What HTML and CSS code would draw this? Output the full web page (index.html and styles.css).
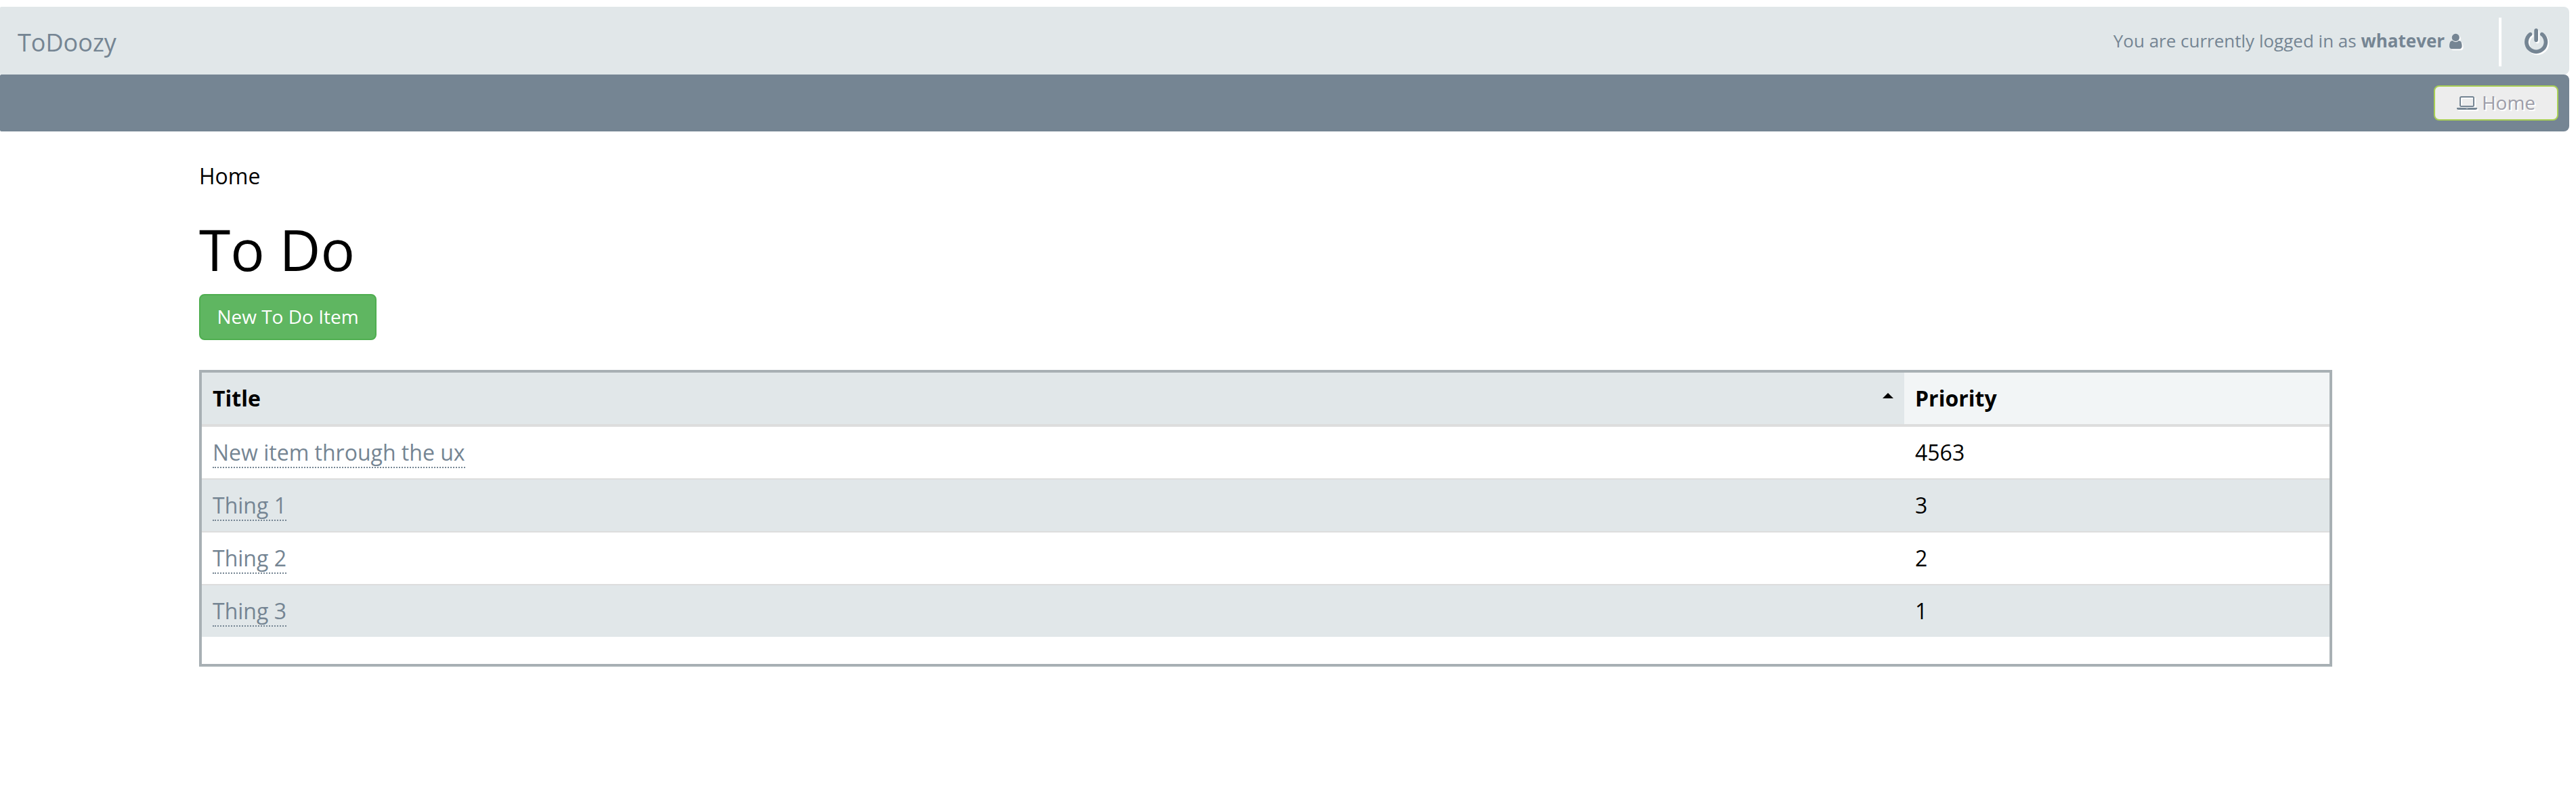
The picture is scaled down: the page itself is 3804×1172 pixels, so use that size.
FILE: index.html
```html
<!DOCTYPE html>
<html lang="en">
<head>
<meta charset="utf-8">
<title>ToDoozy</title>
<link rel="stylesheet" href="styles.css">
</head>
<body>
<header class="topbar">
  <a class="brand">ToDoozy</a>
  <div class="session">
    <span class="login">You are currently logged in as <strong>whatever</strong></span>
    <svg class="icon icon-user" viewBox="0 0 1280 1792"><path d="M1280 1399q0 109-62.5 187t-150.5 78h-854q-88 0-150.5-78t-62.5-187q0-85 8.5-160.5t31.5-152 58.5-131 94-89 134.5-34.5q131 128 313 128t313-128q76 0 134.5 34.5t94 89 58.5 131 31.5 152 8.5 160.5zm-256-887q0 159-112.5 271.5t-271.5 112.5-271.5-112.5-112.5-271.5 112.5-271.5 271.5-112.5 271.5 112.5 112.5 271.5z"/></svg>
  </div>
  <a class="logout">
    <svg class="icon icon-power" viewBox="0 0 1536 1792"><path d="M1536 896q0 156-61 298t-164 245-245 164-298 61-298-61-245-164-164-245-61-298q0-182 80.5-343t226.5-270q43-32 95.5-25t83.5 50q32 42 24.5 94.5t-49.5 84.5q-98 74-151.5 181t-53.5 228q0 104 40.5 198.5t109.5 163.5 163.5 109.5 198.5 40.5 198.5-40.5 163.5-109.5 109.5-163.5 40.5-198.5q0-121-53.5-228t-151.5-181q-42-32-49.5-84.5t24.5-94.5q31-43 84-50t95 25q146 109 226.5 270t80.5 343zm-640-768v640q0 52-38 90t-90 38-90-38-38-90v-640q0-52 38-90t90-38 90 38 38 90z"/></svg>
  </a>
</header>
<nav class="menubar">
  <a class="menu-item">
    <svg class="icon icon-laptop" viewBox="0 0 1920 1792"><path d="M416 1280q-66 0-113-47t-47-113v-704q0-66 47-113t113-47h1088q66 0 113 47t47 113v704q0 66-47 113t-113 47h-1088zm-32-864v704q0 13 9.5 22.5t22.5 9.5h1088q13 0 22.5-9.5t9.5-22.5v-704q0-13-9.5-22.5t-22.5-9.5h-1088q-13 0-22.5 9.5t-9.5 22.5zm1376 928h160v96q0 40-47 68t-113 28h-1600q-66 0-113-28t-47-68v-96h1760zm-720 96q16 0 16-16t-16-16h-160q-16 0-16 16t16 16h160z"/></svg>
    <span class="menu-label">Home</span>
  </a>
</nav>
<main class="page">
  <div class="breadcrumb">Home</div>
  <h1 class="title">To Do</h1>
  <a class="btn-new">New To Do Item</a>
  <div class="grid">
    <table class="items">
      <thead>
        <tr>
          <th class="col-title sorted"><div class="head">Title<span class="caret"></span></div></th>
          <th class="col-priority">Priority</th>
        </tr>
      </thead>
      <tbody>
        <tr><td><a class="link">New item through the ux</a></td><td>4563</td></tr>
        <tr><td><a class="link">Thing 1</a></td><td>3</td></tr>
        <tr><td><a class="link">Thing 2</a></td><td>2</td></tr>
        <tr><td><a class="link">Thing 3</a></td><td>1</td></tr>
      </tbody>
    </table>
  </div>
</main>
</body>
</html>
```
FILE: styles.css
```css
* { box-sizing: border-box; }

body {
  margin: 0;
  padding-top: 10px;
  background: #fff;
  color: #000;
  font-family: "Open Sans", "Noto Sans", sans-serif;
  font-size: 32px;
  line-height: 44px;
}

.icon {
  display: block;
  flex: none;
  fill: #758593;
  overflow: visible;
  filter: drop-shadow(2px 2px 0 #fff);
}

.topbar {
  display: flex;
  align-items: center;
  width: 3794px;
  height: 100px;
  padding: 0 32px 0 26px;
  background: #e1e7e9;
  border-radius: 2px 8px 8px 2px;
  color: #758593;
}

.brand {
  margin-top: 6px;
  font-size: 36px;
}

.session {
  display: flex;
  align-items: center;
  margin-left: auto;
  gap: 7px;
  font-size: 26px;
}

.icon-user { width: 18.6px; height: 26px; margin-top: 2px; }

.logout {
  display: flex;
  align-items: center;
  height: 72px;
  margin-top: 4px;
  margin-left: 54px;
  padding-left: 34px;
  border-left: 4px solid #fff;
}

.icon-power { width: 34.3px; height: 40px; }

.menubar {
  display: flex;
  align-items: center;
  justify-content: flex-end;
  width: 3794px;
  height: 84px;
  padding-right: 16px;
  background: #758593;
  border-radius: 2px 8px 8px 2px;
}

.menu-item {
  display: flex;
  align-items: center;
  justify-content: center;
  gap: 7px;
  width: 184px;
  height: 52px;
  background: #ededed;
  border: 2px solid #a9cf54;
  border-radius: 8px;
  color: #9e9ea9;
  font-size: 28px;
  text-shadow: 2px 2px 0 #fff;
}

.menu-label { margin-bottom: 2px; }

.icon-laptop { width: 30px; height: 28px; }

.page {
  width: 3150px;
  margin-left: 294px;
  padding-top: 44px;
}

.title {
  margin: 40px 0 0;
  font-size: 84px;
  font-weight: 400;
  line-height: 92px;
}

.btn-new {
  display: flex;
  align-items: center;
  justify-content: center;
  width: 262px;
  height: 68px;
  margin: 20px 0 44px;
  padding-bottom: 2px;
  background: #5fb661;
  border: 2px solid #4fae50;
  border-radius: 8px;
  color: #fff;
  font-size: 28px;
}

.grid {
  height: 438px;
  border: 4px solid #a8b0b4;
}

.items {
  width: 100%;
  table-layout: fixed;
  border-collapse: separate;
  border-spacing: 0;
}

.items th,
.items td {
  padding: 16px;
  text-align: left;
}

.items th {
  height: 80px;
  border-bottom: 4px solid #ddd;
  background: #f2f5f6;
  font-weight: 700;
}

.items th.sorted { background: #e1e7e9; }

.col-title { width: 2514px; }

.head {
  display: flex;
  align-items: center;
  justify-content: space-between;
}

.caret {
  margin: -8px 0 0;
  border: 8px solid transparent;
  border-top: 0;
  border-bottom-color: #000;
}

.items tr + tr td { border-top: 2px solid #ddd; }

.items tbody tr:nth-child(even) { background: #e1e7e9; }

.link {
  color: #758593;
  border-bottom: 2px dotted #758593;
}
```
